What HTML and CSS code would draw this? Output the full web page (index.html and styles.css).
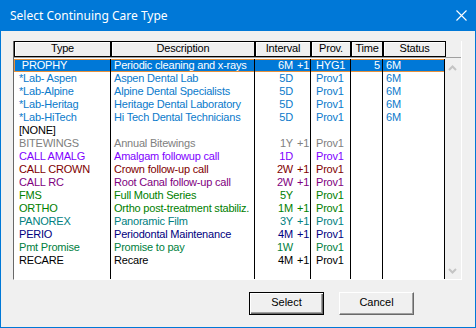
FILE: index.html
```html
<!DOCTYPE html>
<html lang="en">
<head>
    <meta charset="UTF-8">
    <meta name="viewport" content="width=device-width, initial-scale=1.0">
    <title>Select Continuing Care Type</title>
    <link rel="stylesheet" href="styles.css">
</head>
<body>
    <div class="window">
        <div class="titlebar">
            <span class="title">Select Continuing Care Type</span>
            <svg class="close" width="11" height="11" viewBox="0 0 11 11">
                <path d="M0.5 0.5 L10.5 10.5 M10.5 0.5 L0.5 10.5" stroke="#fff" stroke-width="1.1" fill="none"/>
            </svg>
        </div>

        <div class="content">
            <div class="listbox">
                <div class="header-row">
                    <div class="hcell w-type">Type</div>
                    <div class="hcell w-desc">Description</div>
                    <div class="hcell w-int">Interval</div>
                    <div class="hcell w-prov">Prov.</div>
                    <div class="hcell w-time">Time</div>
                    <div class="hcell w-status">Status</div>
                </div>

                <div class="list-body">
                    <div class="rows">
                        <div class="row selected">
                            <div class="cell c-type"> PROPHY</div>
                            <div class="cell c-desc">Periodic cleaning and x-rays</div>
                            <div class="cell c-int"><span class="val">6M</span><span class="plus">+1</span></div>
                            <div class="cell c-prov">HYG1</div>
                            <div class="cell c-time">5</div>
                            <div class="cell c-status">6M</div>
                        </div>
                        <div class="row blue">
                            <div class="cell c-type">*Lab- Aspen</div>
                            <div class="cell c-desc">Aspen Dental Lab</div>
                            <div class="cell c-int"><span class="val">5D</span><span class="plus"></span></div>
                            <div class="cell c-prov">Prov1</div>
                            <div class="cell c-time"></div>
                            <div class="cell c-status">6M</div>
                        </div>
                        <div class="row blue">
                            <div class="cell c-type">*Lab-Alpine</div>
                            <div class="cell c-desc">Alpine Dental Specialists</div>
                            <div class="cell c-int"><span class="val">5D</span><span class="plus"></span></div>
                            <div class="cell c-prov">Prov1</div>
                            <div class="cell c-time"></div>
                            <div class="cell c-status">6M</div>
                        </div>
                        <div class="row blue">
                            <div class="cell c-type">*Lab-Heritag</div>
                            <div class="cell c-desc">Heritage Dental Laboratory</div>
                            <div class="cell c-int"><span class="val">5D</span><span class="plus"></span></div>
                            <div class="cell c-prov">Prov1</div>
                            <div class="cell c-time"></div>
                            <div class="cell c-status">6M</div>
                        </div>
                        <div class="row blue">
                            <div class="cell c-type">*Lab-HiTech</div>
                            <div class="cell c-desc">Hi Tech Dental Technicians</div>
                            <div class="cell c-int"><span class="val">5D</span><span class="plus"></span></div>
                            <div class="cell c-prov">Prov1</div>
                            <div class="cell c-time"></div>
                            <div class="cell c-status">6M</div>
                        </div>
                        <div class="row black">
                            <div class="cell c-type">[NONE]</div>
                            <div class="cell c-desc"></div>
                            <div class="cell c-int"></div>
                            <div class="cell c-prov"></div>
                            <div class="cell c-time"></div>
                            <div class="cell c-status"></div>
                        </div>
                        <div class="row gray">
                            <div class="cell c-type">BITEWINGS</div>
                            <div class="cell c-desc">Annual Bitewings</div>
                            <div class="cell c-int"><span class="val">1Y</span><span class="plus">+1</span></div>
                            <div class="cell c-prov">Prov1</div>
                            <div class="cell c-time"></div>
                            <div class="cell c-status"></div>
                        </div>
                        <div class="row violet">
                            <div class="cell c-type">CALL AMALG</div>
                            <div class="cell c-desc">Amalgam followup call</div>
                            <div class="cell c-int"><span class="val">1D</span><span class="plus"></span></div>
                            <div class="cell c-prov">Prov1</div>
                            <div class="cell c-time"></div>
                            <div class="cell c-status"></div>
                        </div>
                        <div class="row maroon">
                            <div class="cell c-type">CALL CROWN</div>
                            <div class="cell c-desc">Crown follow-up call</div>
                            <div class="cell c-int"><span class="val">2W</span><span class="plus">+1</span></div>
                            <div class="cell c-prov">Prov1</div>
                            <div class="cell c-time"></div>
                            <div class="cell c-status"></div>
                        </div>
                        <div class="row purple">
                            <div class="cell c-type">CALL RC</div>
                            <div class="cell c-desc">Root Canal follow-up call</div>
                            <div class="cell c-int"><span class="val">2W</span><span class="plus">+1</span></div>
                            <div class="cell c-prov">Prov1</div>
                            <div class="cell c-time"></div>
                            <div class="cell c-status"></div>
                        </div>
                        <div class="row green">
                            <div class="cell c-type">FMS</div>
                            <div class="cell c-desc">Full Mouth Series</div>
                            <div class="cell c-int"><span class="val">5Y</span><span class="plus"></span></div>
                            <div class="cell c-prov">Prov1</div>
                            <div class="cell c-time"></div>
                            <div class="cell c-status"></div>
                        </div>
                        <div class="row green">
                            <div class="cell c-type">ORTHO</div>
                            <div class="cell c-desc">Ortho post-treatment stabiliz.</div>
                            <div class="cell c-int"><span class="val">1M</span><span class="plus">+1</span></div>
                            <div class="cell c-prov">Prov1</div>
                            <div class="cell c-time"></div>
                            <div class="cell c-status"></div>
                        </div>
                        <div class="row teal">
                            <div class="cell c-type">PANOREX</div>
                            <div class="cell c-desc">Panoramic Film</div>
                            <div class="cell c-int"><span class="val">3Y</span><span class="plus">+1</span></div>
                            <div class="cell c-prov">Prov1</div>
                            <div class="cell c-time"></div>
                            <div class="cell c-status"></div>
                        </div>
                        <div class="row navy">
                            <div class="cell c-type">PERIO</div>
                            <div class="cell c-desc">Periodontal Maintenance</div>
                            <div class="cell c-int"><span class="val">4M</span><span class="plus">+1</span></div>
                            <div class="cell c-prov">Prov1</div>
                            <div class="cell c-time"></div>
                            <div class="cell c-status"></div>
                        </div>
                        <div class="row sea">
                            <div class="cell c-type">Pmt Promise</div>
                            <div class="cell c-desc">Promise to pay</div>
                            <div class="cell c-int"><span class="val">1W</span><span class="plus"></span></div>
                            <div class="cell c-prov">Prov1</div>
                            <div class="cell c-time"></div>
                            <div class="cell c-status"></div>
                        </div>
                        <div class="row black">
                            <div class="cell c-type">RECARE</div>
                            <div class="cell c-desc">Recare</div>
                            <div class="cell c-int"><span class="val">4M</span><span class="plus">+1</span></div>
                            <div class="cell c-prov">Prov1</div>
                            <div class="cell c-time"></div>
                            <div class="cell c-status"></div>
                        </div>
                        <!-- empty space below the last entry keeps the column lines -->
                        <div class="row filler">
                            <div class="cell c-type"></div>
                            <div class="cell c-desc"></div>
                            <div class="cell c-int"></div>
                            <div class="cell c-prov"></div>
                            <div class="cell c-time"></div>
                            <div class="cell c-status"></div>
                        </div>
                    </div>

                    <div class="scrollbar">
                        <svg width="16" height="6" viewBox="0 0 16 6">
                            <path d="M4 5 L7.5 1.5 L11 5" stroke="#c4c4c4" stroke-width="2" fill="none"/>
                        </svg>
                        <svg width="16" height="6" viewBox="0 0 16 6">
                            <path d="M4 1 L7.5 4.5 L11 1" stroke="#c4c4c4" stroke-width="2" fill="none"/>
                        </svg>
                    </div>
                </div>
            </div>

            <div class="buttons">
                <button type="button" class="btn btn-default">Select</button>
                <button type="button" class="btn">Cancel</button>
            </div>
        </div>
    </div>
</body>
</html>
```

FILE: styles.css
```css
body {
    margin: 0;
    padding: 0;
    background-color: #f0f0f0;
    font-family: "Liberation Sans", Arial, sans-serif;
}

.window {
    width: 476px;
    height: 328px;
    box-sizing: border-box;
    border: 1px solid #0078d7;
    border-top: none;
    background-color: #f0f0f0;
    display: flex;
    flex-direction: column;
}

.titlebar {
    height: 31px;
    background-color: #0078d7;
    display: flex;
    align-items: center;
    justify-content: space-between;
    padding: 0 9px 0 9px;
    margin: 0 -1px;
}

.title {
    color: #ffffff;
    font-family: "Noto Sans", sans-serif;
    font-size: 12px;
    padding-left: 1px;
}

.close {
    display: block;
}

.content {
    flex: 1;
    padding: 10px 0 0 12px;
    display: flex;
    flex-direction: column;
}

.listbox {
    width: 449px;
    height: 239px;
    box-sizing: border-box;
    border-left: 1px solid #696969;
    border-right: 1px solid #ffffff;
    border-bottom: 1px solid #ffffff;
    display: flex;
    flex-direction: column;
    font-size: 11px;
    letter-spacing: -0.2px;
}

.header-row {
    display: flex;
    height: 16px;
}

.hcell {
    box-sizing: border-box;
    height: 16px;
    border: 1px solid #000000;
    background-color: #f0f0f0;
    box-shadow: inset 1px 1px 0 #ffffff;
    text-align: center;
    line-height: 13px;
    color: #000000;
}

.w-type { width: 97px; }
.w-desc { width: 144px; }
.w-int { width: 56px; }
.w-prov { width: 40px; }
.w-time { width: 32px; }
.w-status { width: 63px; }

.list-body {
    flex: 1;
    display: flex;
    border-top: 1px solid #a0a0a0;
}

.rows {
    width: 431px;
    background-color: #ffffff;
    padding-top: 1px;
    display: flex;
    flex-direction: column;
}

.row {
    display: grid;
    grid-template-columns: 97px 144px 56px 40px 32px 62px;
    height: 13px;
    line-height: 13px;
    white-space: pre;
}

.row.filler {
    flex: 1;
}

.cell {
    box-sizing: border-box;
    border-right: 1px solid #000000;
    overflow: hidden;
}

.c-type { padding-left: 5px; }
.c-desc { padding-left: 3px; }
.c-int { display: flex; }
.c-prov { padding-left: 5px; }
.c-time { text-align: right; padding-right: 2px; }
.c-status { padding-left: 3px; }

.val {
    width: 38px;
    text-align: right;
}

.plus {
    margin-left: 4px;
}

.row.selected {
    background-color: #0078d7;
    color: #ffffff;
    box-shadow: inset 0 0 0 1px #e8913c;
}

.row.blue { color: #0a7acb; }
.row.black { color: #000000; }
.row.gray { color: #808080; }
.row.violet { color: #8000ff; }
.row.maroon { color: #800000; }
.row.purple { color: #800080; }
.row.green { color: #008000; }
.row.teal { color: #008080; }
.row.navy { color: #000080; }
.row.sea { color: #008040; }

.scrollbar {
    width: 16px;
    background-color: #f0f0f0;
    display: flex;
    flex-direction: column;
    justify-content: space-between;
    padding: 7px 0 5px 0;
}

.scrollbar svg {
    display: block;
}

.buttons {
    display: flex;
    justify-content: flex-end;
    gap: 15px;
    margin-top: 12px;
    padding-right: 61px;
}

.btn {
    width: 75px;
    height: 23px;
    box-sizing: border-box;
    padding: 0 0 3px 0;
    font-family: "Liberation Sans", Arial, sans-serif;
    font-size: 11px;
    line-height: 18px;
    color: #000000;
    background-color: #f0f0f0;
    border: 1px solid;
    border-color: #ffffff #696969 #696969 #ffffff;
    box-shadow: inset -1px -1px 0 #a0a0a0;
}

.btn-default {
    border-color: #000000;
    box-shadow: inset 1px 1px 0 #ffffff, inset -1px -1px 0 #696969, inset -2px -2px 0 #a0a0a0;
}
```
